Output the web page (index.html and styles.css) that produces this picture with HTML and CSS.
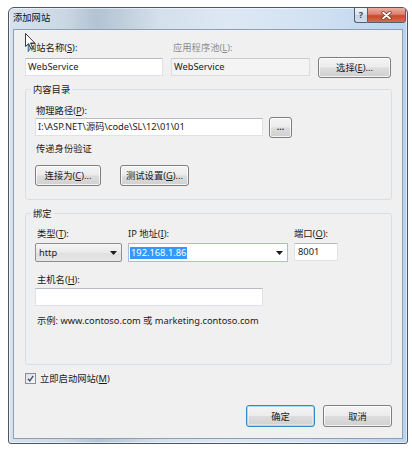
FILE: index.html
```html
<!DOCTYPE html>
<html lang="zh-CN">
<head>
<meta charset="utf-8">
<title>添加网站</title>
<link rel="stylesheet" href="styles.css">
</head>
<body>
<div class="window">
  <div class="titlebar">
    <span class="title">添加网站</span>
    <div class="caption-btns">
      <div class="cbtn help">?</div>
      <div class="cbtn close">
        <svg width="11" height="9" viewBox="0 0 11 9">
          <path d="M2 1.5 L9 7.5 M9 1.5 L2 7.5" stroke="#6b2a1e" stroke-width="3.2" stroke-linecap="round"/>
          <path d="M2 1.5 L9 7.5 M9 1.5 L2 7.5" stroke="#ffffff" stroke-width="1.8" stroke-linecap="round"/>
        </svg>
      </div>
    </div>
  </div>
  <div class="client">
    <div class="site-grid">
      <div class="label">网站名称(<u>S</u>):</div>
      <div class="label muted">应用程序池(<u>L</u>):</div>
      <div></div>
      <div class="textbox">WebService</div>
      <div class="textbox readonly">WebService</div>
      <div class="btn btn-select">选择(<u>E</u>)...</div>
    </div>

    <fieldset class="group group-content">
      <legend>内容目录</legend>
      <div class="group-body body-content">
        <div class="label">物理路径(<u>P</u>):</div>
        <div class="path-row">
          <div class="textbox path">I:\ASP.NET\源码\code\SL\12\01\01</div>
          <div class="btn btn-browse">...</div>
        </div>
        <div class="label pass-label">传递身份验证</div>
        <div class="auth-row">
          <div class="btn btn-connect">连接为(<u>C</u>)...</div>
          <div class="btn btn-test">测试设置(<u>G</u>)...</div>
        </div>
      </div>
    </fieldset>

    <fieldset class="group group-binding">
      <legend>绑定</legend>
      <div class="group-body body-binding">
        <div class="bind-grid">
          <div class="label">类型(<u>T</u>):</div>
          <div class="label">IP 地址(<u>I</u>):</div>
          <div class="label">端口(<u>O</u>):</div>
          <div class="combo combo-type">
            <span class="combo-text">http</span>
            <svg class="arrow" width="7" height="4" viewBox="0 0 7 4"><path d="M0 0 H7 L3.5 4 Z" fill="#1a1a1a"/></svg>
          </div>
          <div class="combo combo-ip">
            <span class="sel">192.168.1.86</span>
            <svg class="arrow" width="7" height="4" viewBox="0 0 7 4"><path d="M0 0 H7 L3.5 4 Z" fill="#1a1a1a"/></svg>
          </div>
          <div class="textbox port">8001</div>
        </div>
        <div class="label host-label">主机名(<u>H</u>):</div>
        <div class="textbox host"></div>
        <div class="label example">示例: www.contoso.com 或 marketing.contoso.com</div>
      </div>
    </fieldset>

    <div class="check-row">
      <svg class="checkbox" width="11" height="11" viewBox="0 0 11 11">
        <defs>
          <linearGradient id="cbg" x1="0" y1="0" x2="1" y2="1">
            <stop offset="0" stop-color="#dcdcdc"/>
            <stop offset="1" stop-color="#fbfbfb"/>
          </linearGradient>
        </defs>
        <rect x="0.5" y="0.5" width="10" height="10" fill="url(#cbg)" stroke="#8e8f8f"/>
        <path d="M3 5.8 L4.8 7.8 L8.2 2.8" fill="none" stroke="#3f4f86" stroke-width="1.4"/>
      </svg>
      <span class="label">立即启动网站(<u>M</u>)</span>
    </div>

    <div class="dialog-buttons">
      <div class="btn btn-ok">确定</div>
      <div class="btn btn-cancel">取消</div>
    </div>
  </div>
</div>

<svg class="cursor" width="12" height="17" viewBox="0 0 12 17">
  <path d="M0.5 0.5 L0.5 13.5 L3.6 10.6 L5.8 15.5 L7.6 14.7 L5.5 10 L9.8 10 Z" fill="#ffffff" stroke="#3a3a3a" stroke-width="1" stroke-linejoin="round"/>
</svg>
</body>
</html>
```

FILE: styles.css
```css
* {
  box-sizing: border-box;
}

html, body {
  margin: 0;
  padding: 0;
  background: #ffffff;
}

body {
  position: relative;
  width: 412px;
  height: 450px;
  overflow: hidden;
  font-family: "Noto Sans", "Noto Sans CJK SC", sans-serif;
  font-size: 9.3px;
  line-height: 13px;
  color: #1b1b1b;
}

u {
  text-decoration: underline;
  text-underline-offset: 1px;
}

/* ---------- window frame ---------- */
.window {
  margin: 7px 0 0 8px;
  width: 400px;
  height: 437px;
  border: 1px solid #4e5660;
  border-radius: 6px 6px 3px 3px;
  background:
    linear-gradient(90deg,
      #d6e2ee 0%, #cbd7e3 14%, #b3c3d3 22%, #bfcddb 28%,
      #d4e0ec 38%, #dde8f4 55%, #d3e2f2 75%, #c2d8f0 92%, #b9d3ef 100%);
  box-shadow: inset 0 0 0 1px rgba(255, 255, 255, 0.55);
  display: flex;
  flex-direction: column;
  overflow: hidden;
}

.titlebar {
  height: 21px;
  flex: none;
  display: flex;
  align-items: flex-start;
  padding-left: 4px;
}

.title {
  padding-top: 3px;
  color: #111;
}

.caption-btns {
  margin-left: auto;
  margin-right: 1px;
  margin-top: -1px;
  display: flex;
}

.cbtn {
  height: 16px;
  border: 1px solid #56616e;
  display: flex;
  align-items: center;
  justify-content: center;
}

.help {
  width: 13px;
  border-right: none;
  border-radius: 0 0 0 3px;
  background: linear-gradient(#eef3f8, #d9e3ee 50%, #c6d4e3 51%, #d2deea);
  color: #3b4654;
  font-size: 9px;
  font-weight: bold;
  line-height: 14px;
}

.close {
  width: 39px;
  border-radius: 0 0 3px 0;
  background: linear-gradient(#eab0a3, #dc7f6d 45%, #c9472f 55%, #d86c55);
}

/* ---------- client area ---------- */
.client {
  flex: 1;
  margin: 0 4px 4px 4px;
  background: #f0f0f0;
  border: 1px solid #8c9fb4;
  padding: 11px 10px 11px 11px;
  display: flex;
  flex-direction: column;
}

.label {
  line-height: 13px;
  white-space: nowrap;
}

.muted {
  color: #8d8d8d;
}

.site-grid {
  display: grid;
  grid-template-columns: 138px 139px 73px;
  grid-template-rows: 13px 21px;
  column-gap: 8px;
  row-gap: 3px;
}

.site-grid .label {
  padding-left: 2px;
}

.site-grid .textbox {
  margin-top: 1px;
}

/* ---------- text boxes ---------- */
.textbox {
  height: 18px;
  background: #ffffff;
  border: 1px solid #dfe3e9;
  border-top-color: #b7bcc3;
  padding-left: 2px;
  line-height: 16px;
  white-space: nowrap;
  overflow: hidden;
}

.textbox.readonly {
  background: #f4f4f4;
  border-color: #dadee3;
  border-top-color: #c9cdd2;
}

/* ---------- buttons ---------- */
.btn {
  height: 21px;
  border: 1px solid #7d7e80;
  border-radius: 3px;
  background: linear-gradient(#f4f4f4 0%, #ececec 48%, #dddddd 52%, #d0d0d0 100%);
  box-shadow: inset 0 0 0 1px rgba(255, 255, 255, 0.75);
  display: flex;
  align-items: center;
  justify-content: center;
  white-space: nowrap;
  line-height: 13px;
}

.btn-browse {
  width: 23px;
  font-size: 9px;
  font-weight: bold;
  letter-spacing: 0;
  color: #333;
  padding-bottom: 3px;
}

.btn-connect {
  width: 66px;
}

.btn-test {
  width: 69px;
}

.btn-ok,
.btn-cancel {
  width: 69px;
  height: 22px;
}

.btn-ok {
  border-color: #3a86c0;
  box-shadow: inset 0 0 0 1px #9fdcf7, inset 0 0 0 2px rgba(255, 255, 255, 0.4);
}

/* ---------- group boxes ---------- */
.group {
  margin: 0;
  padding: 0;
  border: 1px solid #d5dfe5;
  border-radius: 3px;
  min-width: 0;
}

.group legend {
  margin-left: 5px;
  padding: 0 2px;
  line-height: 13px;
}

.group-content {
  margin-top: 5px;
}

.group-binding {
  margin-top: 7px;
}

.group-body {
  padding-left: 9px;
}

.body-content {
  padding-top: 8px;
  padding-bottom: 13px;
}

.body-content > .label:first-child {
  padding-left: 1px;
}

.path-row {
  display: flex;
  gap: 6px;
  align-items: flex-start;
}

.textbox.path {
  width: 228px;
  margin-top: 1px;
}

.pass-label {
  margin-top: 4px;
  padding-left: 1px;
}

.auth-row {
  margin-top: 10px;
  display: flex;
  gap: 19px;
}

.body-binding {
  padding-top: 7px;
  padding-bottom: 37px;
}

.bind-grid {
  display: grid;
  grid-template-columns: 87px 160px 44px;
  grid-template-rows: 13px 20px;
  column-gap: 6px;
  row-gap: 3px;
  align-items: start;
}

.bind-grid .label:first-child {
  padding-left: 2px;
}

.combo {
  height: 19px;
  display: flex;
  align-items: center;
}

.combo .arrow {
  margin-left: auto;
}

.combo-type {
  border: 1px solid #8e8f8f;
  border-radius: 2px;
  background: linear-gradient(#f6f6f6, #e9e9e9 50%, #dfdfdf 51%, #e6e6e6);
  padding: 0 4px 0 3px;
}

.combo-ip {
  background: #ffffff;
  border: 1px solid #a7bfdb;
  padding: 0 4px 0 1px;
}

.sel {
  background: #3399ff;
  color: #ffffff;
  line-height: 12px;
  padding: 0 1px;
}

.textbox.port {
  width: 44px;
  padding-left: 3px;
}

.host-label {
  margin-top: 10px;
  padding-left: 2px;
}

.textbox.host {
  width: 228px;
  margin-top: 2px;
}

.example {
  margin-top: 8px;
  padding-left: 2px;
}

/* ---------- checkbox row ---------- */
.check-row {
  margin-top: 7px;
  display: flex;
  align-items: center;
  gap: 4px;
}

/* ---------- dialog buttons ---------- */
.dialog-buttons {
  margin-top: auto;
  display: flex;
  justify-content: flex-end;
  gap: 8px;
}

/* ---------- mouse pointer overlay ---------- */
.cursor {
  position: absolute;
  left: 25px;
  top: 33px;
}
```
